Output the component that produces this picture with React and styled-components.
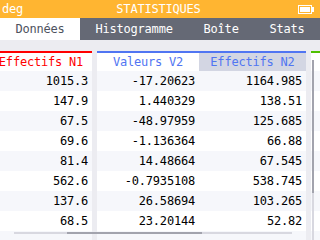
import React from 'react';
import styled, { createGlobalStyle } from 'styled-components';

const Global = createGlobalStyle`
  html, body {
    margin: 0;
    padding: 0;
    background: #ffffff;
  }
`;

const Screen = styled.div`
  width: 320px;
  height: 240px;
  display: flex;
  flex-direction: column;
  overflow: hidden;
  font-family: "DejaVu Sans Mono", "Liberation Mono", monospace;
  font-size: 12px;
  letter-spacing: -0.2px;
`;

const TitleBar = styled.header`
  height: 18px;
  flex: none;
  display: grid;
  grid-template-columns: 1fr auto 1fr;
  align-items: center;
  padding: 0 5px 0 2px;
  background: #ffb531;
  color: #ffffff;
`;

const Angle = styled.span`
  justify-self: start;
`;

const Title = styled.span`
  justify-self: center;
`;

const Battery = styled.svg`
  justify-self: end;
  display: block;
`;

const TabBar = styled.nav`
  height: 22px;
  flex: none;
  display: flex;
  background: #656975;
`;

const Tab = styled.div`
  flex: 1 1 auto;
  display: flex;
  align-items: center;
  justify-content: center;
  background: ${p => (p.$active ? '#ffffff' : 'transparent')};
  color: ${p => (p.$active ? '#4e525e' : '#ffffff')};
`;

const Body = styled.main`
  flex: 1;
  position: relative;
  overflow: hidden;
  padding-top: 11px;
  background: #ececf1;
`;

const Table = styled.div`
  display: flex;
  gap: 5px;
  margin-left: -10px;
  align-items: flex-start;
`;

const Group = styled.div`
  display: flex;
  flex: none;
  border-top: 2px solid ${p => p.$color};
`;

const Column = styled.div`
  width: ${p => p.$width}px;
  display: flex;
  flex-direction: column;
`;

const HeaderCell = styled.div`
  height: 18px;
  display: flex;
  align-items: center;
  justify-content: center;
  white-space: nowrap;
  color: ${p => p.$color};
  background: ${p => (p.$selected ? '#d3d6e3' : '#ffffff')};
`;

const Cell = styled.div`
  height: 20px;
  display: flex;
  align-items: center;
  justify-content: flex-end;
  padding-right: 4px;
  color: #000000;
  background: ${p => (p.$shade ? '#f6f7fb' : '#ffffff')};
`;

const HScroll = styled.div`
  position: absolute;
  left: 14px;
  top: 192px;
  width: 278px;
  height: 2px;
  background: #d8d8e0;
`;

const VScroll = styled.div`
  position: absolute;
  left: 312px;
  top: 20px;
  bottom: 0;
  width: 2px;
  background: #d8d8e0;
`;

const Thumb = styled.div`
  position: absolute;
  background: #a2a3ad;
`;

const n1 = ['1015.3', '147.9', '67.5', '69.6', '81.4', '562.6', '137.6', '68.5', ''];
const v2 = ['-17.20623', '1.440329', '-48.97959', '-1.136364', '14.48664', '-0.7935108', '26.58694', '23.20144', ''];
const n2 = ['1164.985', '138.51', '125.685', '66.88', '67.545', '538.745', '103.265', '52.82', ''];
const empty = ['', '', '', '', '', '', '', '', ''];

const DataColumn = ({ width, title, color, selected, values }) => (
  <Column $width={width}>
    <HeaderCell $color={color} $selected={selected}>{title}</HeaderCell>
    {values.map((v, i) => (
      <Cell key={i} $shade={i % 2 === 0}>{v}</Cell>
    ))}
  </Column>
);

export default function App() {
  return (
    <Screen>
      <Global />
      <TitleBar>
        <Angle>deg</Angle>
        <Title>STATISTIQUES</Title>
        <Battery width="17" height="9" viewBox="0 0 17 9">
          <rect x="0.5" y="0.5" width="13" height="8" fill="none" stroke="#fff" />
          <rect x="2" y="2" width="10" height="5" fill="#fff" />
          <rect x="14" y="2" width="2" height="5" fill="#fff" />
        </Battery>
      </TitleBar>
      <TabBar>
        <Tab $active>Données</Tab>
        <Tab>Histogramme</Tab>
        <Tab>Boîte</Tab>
        <Tab>Stats</Tab>
      </TabBar>
      <Body>
        <Table>
          <Group $color="#ff0000">
            <DataColumn width={102} title="Effectifs N1" color="#ff0000" values={n1} />
          </Group>
          <Group $color="#5075f2">
            <DataColumn width={102} title="Valeurs V2" color="#5075f2" values={v2} />
            <DataColumn width={107} title="Effectifs N2" color="#5075f2" selected values={n2} />
          </Group>
          <Group $color="#50c102">
            <DataColumn width={102} title="" color="#50c102" values={empty} />
          </Group>
        </Table>
        <HScroll>
          <Thumb style={{ left: 53, width: 135, top: 0, height: 2 }} />
        </HScroll>
        <VScroll>
          <Thumb style={{ top: 0, height: 133, left: 0, width: 2 }} />
        </VScroll>
      </Body>
    </Screen>
  );
}
